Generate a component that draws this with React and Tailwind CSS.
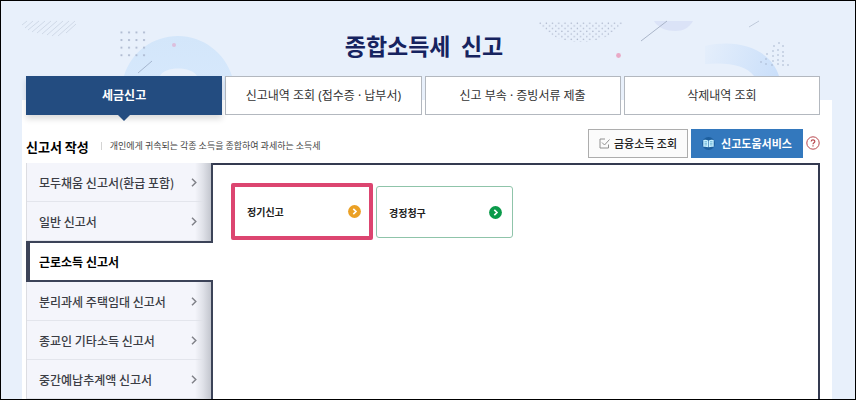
const tabs = ['세금신고', '신고내역 조회 (접수증 · 납부서)', '신고 부속 · 증빙서류 제출', '삭제내역 조회'];

const menu = [
  '모두채움 신고서(환급 포함)',
  '일반 신고서',
  '근로소득 신고서',
  '분리과세 주택임대 신고서',
  '종교인 기타소득 신고서',
  '중간예납추계액 신고서',
];

function LeftArt() {
  return (
    <svg className="absolute left-0 top-0" width="240" height="110" viewBox="1 1 240 110" fill="none" aria-hidden="true">
      <defs>
        <pattern id="dots" x="119.5" y="30.5" width="7.5" height="7.6" patternUnits="userSpaceOnUse">
          <circle cx="2" cy="2" r="1.1" fill="#a9b5cc" />
        </pattern>
        <linearGradient id="arcLeft" x1="0" y1="36" x2="0" y2="80" gradientUnits="userSpaceOnUse">
          <stop stopColor="#d3e6fa" />
          <stop offset="1" stopColor="#d6e8fc" />
        </linearGradient>
      </defs>
      <path d="M124 76C131 52 153 36 178 36C203 36 225 53 232 76L226 100H224V76H197C192 66 164 66 160 76Z" fill="url(#arcLeft)" />
      <g stroke="#c9d3e2" strokeWidth="0.8">
        <path d="M22 25L27 21M25 28L33 21M28 30L39 21M32 32L45 21M37 33L51 21M42 34L57 21M47 35L63 21M52 36L69 21M58 36L75 21M66 33L76 24" />
      </g>
      <rect x="119.5" y="30.5" width="28" height="28" fill="url(#dots)" />
      <path d="M138 73L152 61" stroke="#9fb0ca" strokeWidth="0.9" />
      <circle cx="174" cy="45" r="2" fill="#dcbfdc" />
    </svg>
  );
}

function RightArt() {
  return (
    <svg className="absolute right-0 top-0" width="330" height="110" viewBox="525 1 330 110" fill="none" aria-hidden="true">
      <defs>
        <pattern id="mesh" x="539" y="22" width="6.2" height="5.4" patternUnits="userSpaceOnUse">
          <circle cx="1.2" cy="1.2" r="0.75" fill="#a9b3c9" />
          <circle cx="4.3" cy="3.9" r="0.75" fill="#a9b3c9" />
        </pattern>
        <linearGradient id="arcRight" x1="705" y1="50" x2="778" y2="75" gradientUnits="userSpaceOnUse">
          <stop stopColor="#e4eefb" />
          <stop offset="1" stopColor="#cadffa" />
        </linearGradient>
      </defs>
      <path d="M537 22H624C616 34 601 42 580 42C560 42 545 34 537 22Z" fill="url(#mesh)" />
      <path d="M654 21H693C689 28 683 31 675 31C667 31 658 28 654 21Z" fill="#dbe3f7" />
      <path d="M641 41L667 21" stroke="#a3aec2" strokeWidth="0.9" />
      <path d="M749 27L759 21" stroke="#b4bfd0" strokeWidth="0.8" />
      <circle cx="618.500" cy="55.500" r="2.400" fill="#e9a9c6" />
      <path d="M705 46C740 38 771 50 779 76H754C746 65 728 62 705 64Z" fill="url(#arcRight)" />
      <g fill="#a5b2ca">
        <circle cx="779" cy="43" r="0.800" />
        <circle cx="774" cy="46" r="0.800" />
        <circle cx="783" cy="46" r="0.800" />
        <circle cx="778" cy="50" r="0.800" />
        <circle cx="773" cy="51" r="0.800" />
        <circle cx="783" cy="52" r="0.800" />
        <circle cx="767" cy="54" r="0.800" />
        <circle cx="773" cy="56" r="0.800" />
        <circle cx="778" cy="55" r="0.800" />
        <circle cx="783" cy="56" r="0.800" />
        <circle cx="766" cy="59" r="0.800" />
        <circle cx="773" cy="61" r="0.800" />
        <circle cx="778" cy="60" r="0.800" />
        <circle cx="783" cy="61" r="0.800" />
        <circle cx="761" cy="62" r="0.800" />
        <circle cx="766" cy="64" r="0.800" />
        <circle cx="772" cy="65" r="0.800" />
        <circle cx="778" cy="64" r="0.800" />
        <circle cx="783" cy="65" r="0.800" />
        <circle cx="788" cy="65" r="0.800" />
      </g>
    </svg>
  );
}

function Chevron() {
  return (
    <svg width="6" height="9" viewBox="0 0 6 9" fill="none" stroke="#808289" strokeWidth="1.500" aria-hidden="true">
      <path d="M1 0.700L4.800 4.500L1 8.300" />
    </svg>
  );
}

function RoundArrow({ color }) {
  return (
    <svg width="13" height="13" viewBox="0 0 13 13" aria-hidden="true">
      <circle cx="6.500" cy="6.500" r="6.400" fill={color} />
      <path d="M5.300 3.900L8 6.500L5.300 9.100" fill="none" stroke="#fff" strokeWidth="1.600" />
    </svg>
  );
}

function TabBar() {
  return (
    <nav className="grid grid-cols-4 gap-[3px] font-['Noto_Sans','Noto_Sans_CJK_KR',sans-serif]" aria-label="신고 메뉴">
      {tabs.map((label, i) =>
        i === 0 ? (
          <button
            key={label}
            type="button"
            aria-current="page"
            className="relative h-[39px] bg-[#234c80] text-[12px] font-bold text-white shadow-[0_4px_6px_rgba(0,0,0,0.14)]"
          >
            {label}
            <svg className="absolute left-1/2 top-full -translate-x-1/2" width="12" height="6" viewBox="0 0 12 6" aria-hidden="true">
              <path d="M0 0H12L6 6Z" fill="#234c80" />
            </svg>
          </button>
        ) : (
          <button
            key={label}
            type="button"
            className="h-[39px] border border-[#b3b8bf] bg-white text-[12px] text-[#333]"
          >
            {label}
          </button>
        ),
      )}
    </nav>
  );
}

function TitleRow() {
  return (
    <div className="mt-[13px] flex h-[30px] items-center">
      <h2 className="mt-2 text-[13px] font-bold text-black">신고서 작성</h2>
      <span className="ml-3 mt-1.5 h-2 w-px bg-[#d4d4d4]" />
      <p className="ml-2 mt-1.5 text-[9px] text-[#444]">개인에게 귀속되는 각종 소득을 종합하여 과세하는 소득세</p>
      <button
        type="button"
        className="ml-auto flex h-[29px] w-[100px] items-center justify-center gap-1 border border-[#adadad] bg-[#fbfbfb] text-[11px] font-medium text-[#222]"
      >
        <svg width="11" height="11" viewBox="0 0 11 11" fill="none" stroke="#909090" aria-hidden="true">
          <path d="M6 1H1V10H9.500V6.500" />
          <path d="M3 4.500L5.500 7L10.500 1.500" />
        </svg>
        금융소득 조회
      </button>
      <button
        type="button"
        className="ml-[3px] flex h-[29px] w-[112px] items-center justify-center gap-1.5 bg-[#3378bd] text-[11px] font-bold text-white"
      >
        <svg width="13" height="13" viewBox="0 0 13 13" aria-hidden="true">
          <circle cx="6.500" cy="6.500" r="6.500" fill="#1d5f9e" />
          <path d="M1.300 3Q4.200 2.300 6.200 3.400V10.300Q4.200 9.300 1.300 9.800ZM11.700 3Q8.800 2.300 6.800 3.400V10.300Q8.800 9.300 11.700 9.800Z" fill="#c9f1ff" />
          <path d="M2.500 4.700H5M2.500 6.300H5M2.500 7.900H5M8 4.700H10.500M8 6.300H10.500M8 7.900H10.500" stroke="#3d8fbd" strokeWidth="0.600" />
        </svg>
        신고도움서비스
      </button>
      <button type="button" aria-label="도움말" className="ml-[3px] size-3.5">
        <svg width="14" height="14" viewBox="0 0 14 14" fill="none" stroke="#b9484f" aria-hidden="true">
          <circle cx="7" cy="7" r="6.200" />
          <path d="M5.200 5.600C5.200 3.300 8.800 3.300 8.800 5.500C8.800 6.800 7 6.700 7 8.300" strokeWidth="1.200" />
          <path d="M7 9.300V10.500" strokeWidth="1.200" />
        </svg>
      </button>
    </div>
  );
}

function SideMenu() {
  return (
    <ul className="w-[187px] shrink-0">
      {menu.map((label) =>
        label === '근로소득 신고서' ? (
          <li key={label}>
            <a
              href="#"
              aria-current="page"
              className="flex h-[41px] items-center border-y-2 border-l-4 border-[#3c4358] bg-white pl-[9px] text-[12px] font-bold text-black"
            >
              {label}
            </a>
          </li>
        ) : (
          <li key={label} className="border-r-2 border-[#3c4358]">
            <a
              href="#"
              className="flex h-[39px] items-center justify-between border-l border-[#dcdde2] bg-[linear-gradient(to_left,#c3c6ce,#dfe1e8_8px,transparent_16px),linear-gradient(to_top,#e3e5ec_1px,#f4f5fb_1px)] pl-3 pr-3.5 text-[12px] font-medium text-[#3b3d45]"
            >
              {label}
              <Chevron />
            </a>
          </li>
        ),
      )}
    </ul>
  );
}

export default function App() {
  return (
    <main className="relative flex min-h-screen flex-col border border-black bg-[#e8f0fb] font-['Noto_Sans_CJK_KR',sans-serif]">
      <LeftArt />
      <RightArt />
      <header className="relative flex h-[75px] items-center justify-center pt-3">
        <h1 className="-ml-2 whitespace-pre text-[23px] font-bold leading-8 text-[#16235f]">종합소득세  신고</h1>
      </header>
      <section className="relative ml-[21px] mr-[23px] flex flex-1 flex-col bg-[linear-gradient(to_bottom,transparent_24px,#fff_24px)] pl-1 pr-3">
        <TabBar />
        <TitleRow />
        <div className="mt-[5px] flex flex-1">
          <SideMenu />
          <div className="flex flex-1 items-start gap-[3px] border-r-2 border-t-2 border-[#343a50] pl-[18px] pt-[18px]">
            <button
              type="button"
              className="flex h-[57px] w-[142px] items-center justify-between rounded-[2px] border-4 border-[#dc4570] bg-white pl-3 pr-2 text-[10px] font-bold text-[#222]"
            >
              정기신고
              <RoundArrow color="#eba024" />
            </button>
            <button
              type="button"
              className="mt-[3px] flex h-[52px] w-[137px] items-center justify-between rounded-[3px] border border-[#8fc4aa] bg-white pl-3 pr-2.5 text-[10px] font-bold text-[#222]"
            >
              경정청구
              <RoundArrow color="#0a9a4a" />
            </button>
          </div>
        </div>
      </section>
    </main>
  );
}
